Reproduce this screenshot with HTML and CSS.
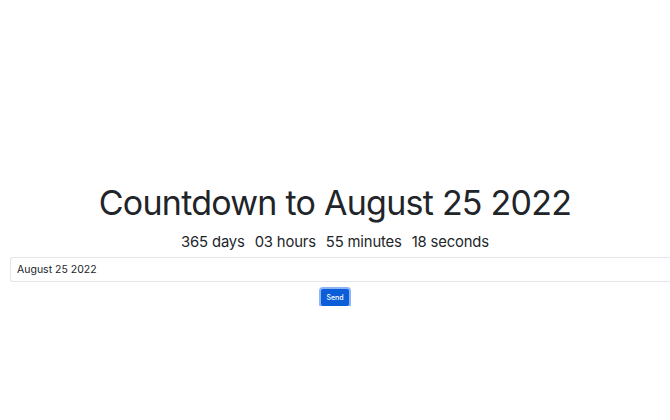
FILE: index.html
```html
<!DOCTYPE html>
<html lang="en">
<head>
<meta charset="utf-8">
<title>Countdown</title>
<link rel="stylesheet" href="styles.css">
</head>
<body>
<main class="page">
  <h1 class="title">Countdown to August 25 2022</h1>
  <div class="timer">
    <span>365 days</span>
    <span>03 hours</span>
    <span>55 minutes</span>
    <span>18 seconds</span>
  </div>
  <input class="date-input" type="text" value="August 25 2022">
  <button class="send" type="button">Send</button>
</main>
</body>
</html>
```
FILE: styles.css
```css
html, body {
  margin: 0;
  padding: 0;
  background: #ffffff;
}
body {
  font-family: Inter, "Liberation Sans", sans-serif;
  color: #212529;
}
.page {
  display: flex;
  flex-direction: column;
  align-items: center;
  padding-top: 181px;
}
.title {
  margin: 0;
  font-size: 34px;
  font-weight: 400;
  line-height: 44px;
  letter-spacing: -0.75px;
}
.timer {
  display: flex;
  gap: 10px;
  font-size: 14.8px;
  line-height: 22px;
  letter-spacing: -0.15px;
  margin-top: 6px;
}
.date-input {
  box-sizing: border-box;
  align-self: flex-start;
  width: 660px;
  height: 25px;
  margin: 4px 0 0 10px;
  padding: 0 6px;
  border: 1px solid #e3e5e8;
  border-right: none;
  border-radius: 3px 0 0 3px;
  font-family: Inter, "Liberation Sans", sans-serif;
  font-size: 10.5px;
  color: #212529;
  outline: none;
}
.send {
  margin-top: 7px;
  width: 28px;
  height: 17px;
  padding: 0;
  border: none;
  border-radius: 2px;
  background: #0b5ed7;
  color: #ffffff;
  font-family: Inter, "Liberation Sans", sans-serif;
  font-size: 7px;
  font-weight: 500;
  box-shadow: 0 0 0 2px #8db4f5;
}
```
